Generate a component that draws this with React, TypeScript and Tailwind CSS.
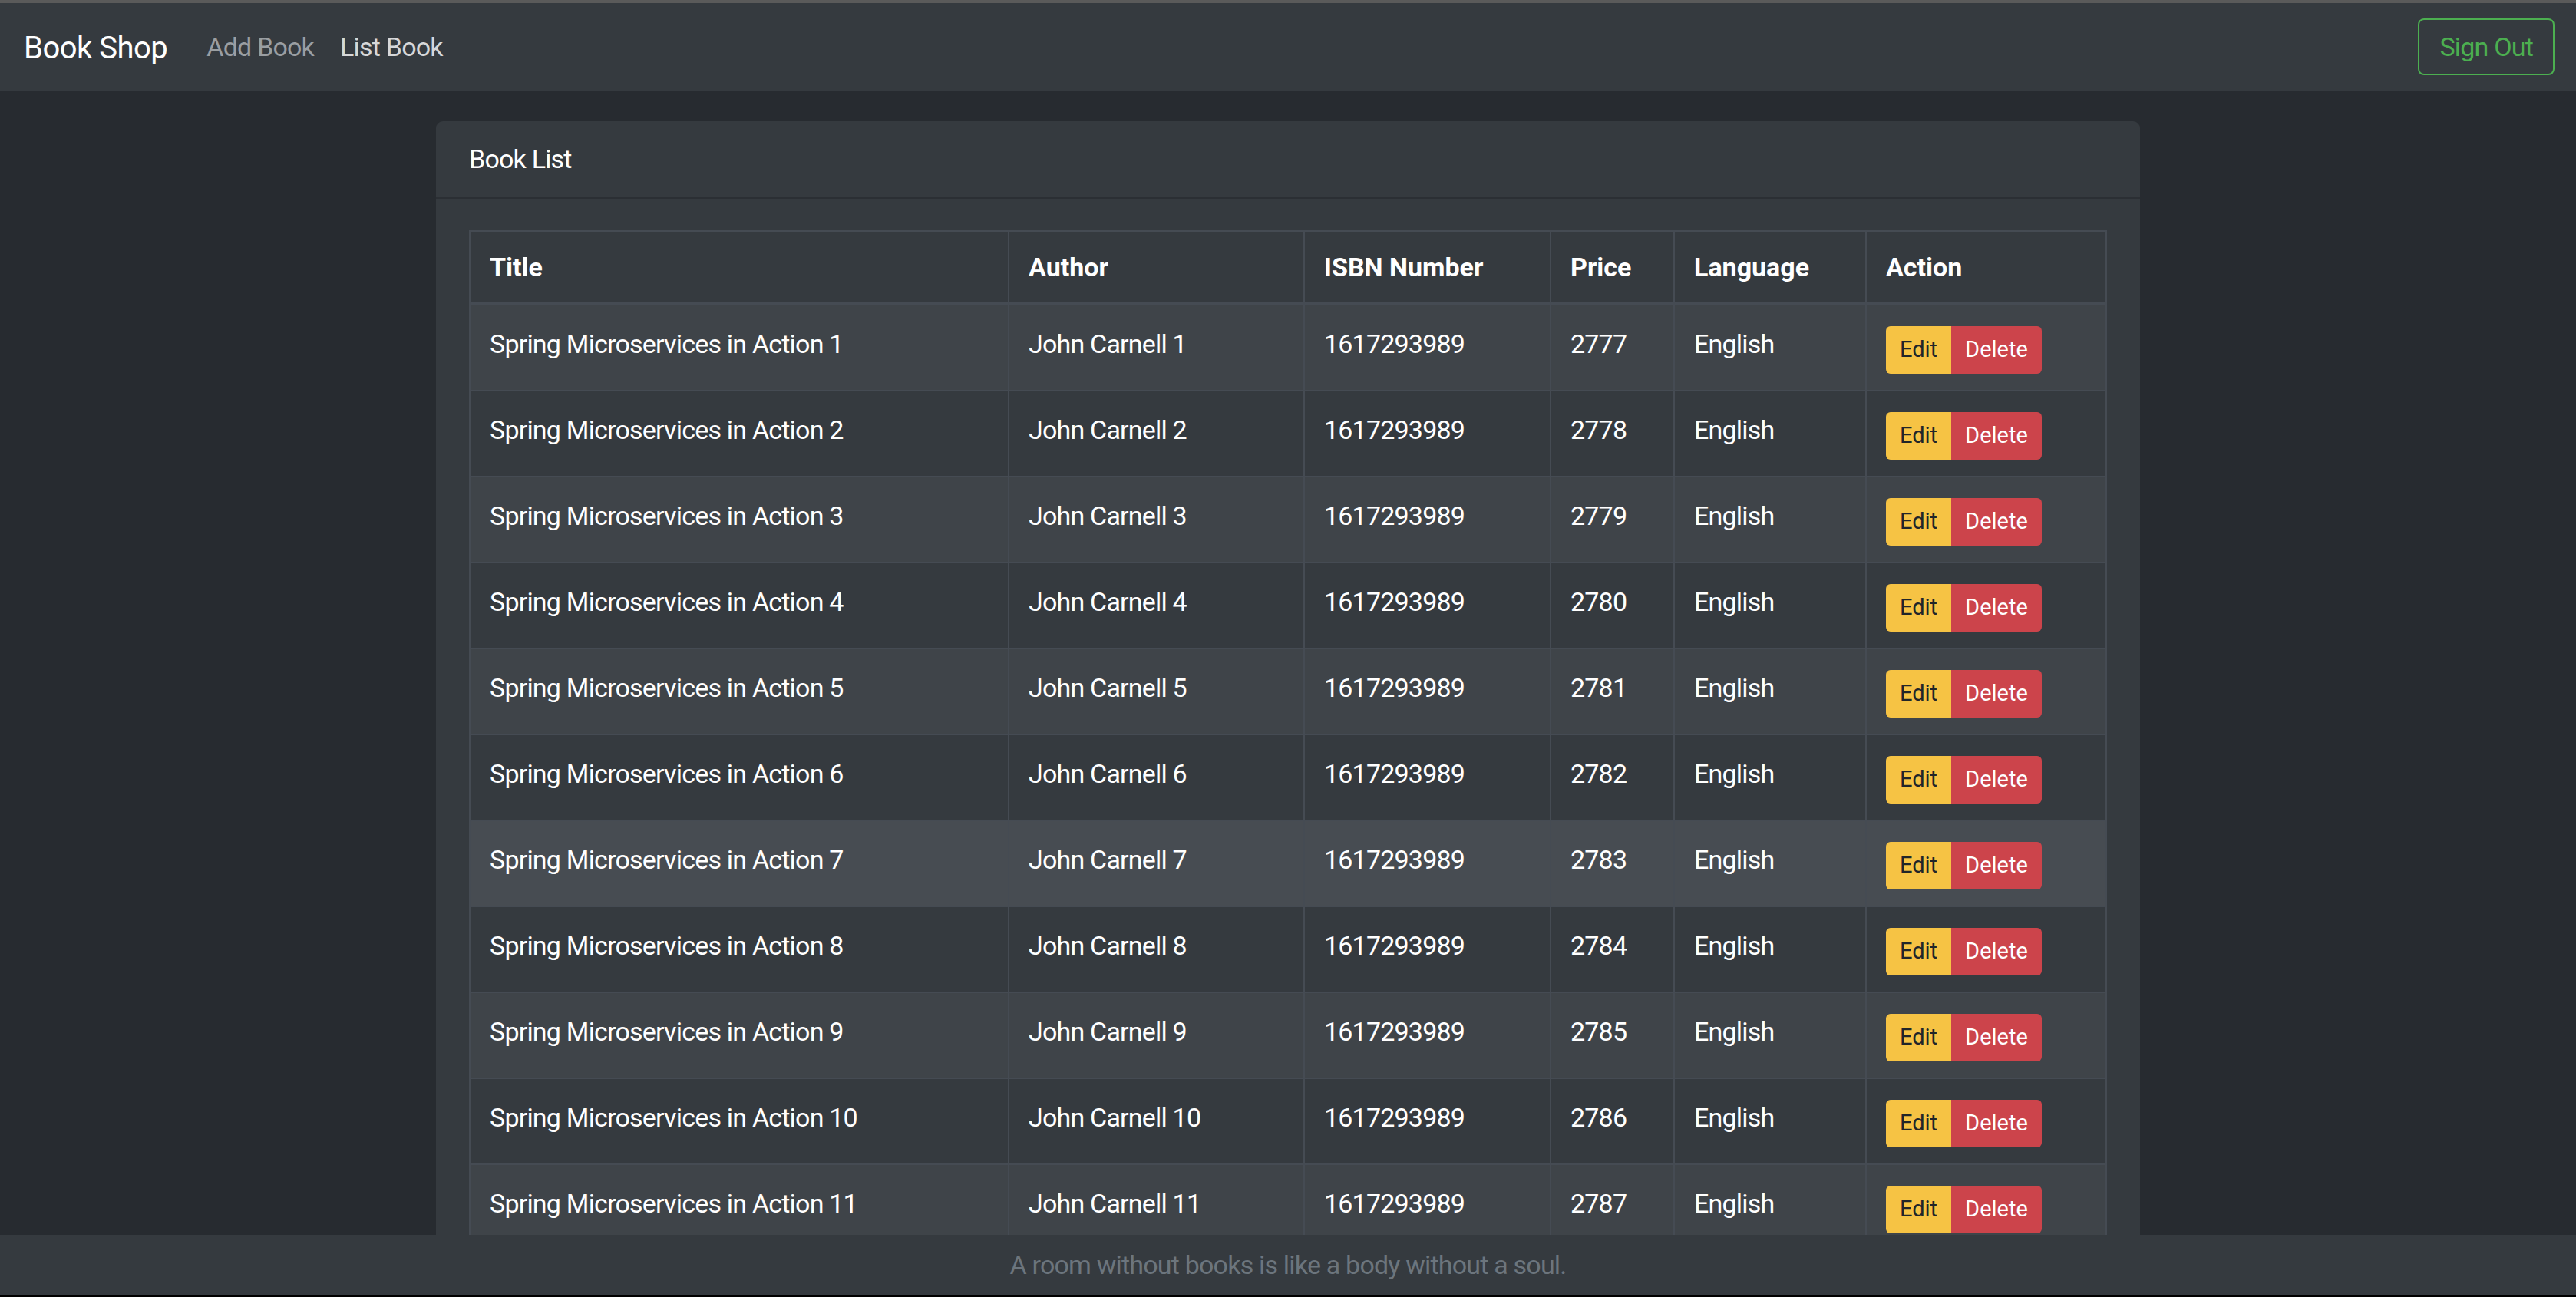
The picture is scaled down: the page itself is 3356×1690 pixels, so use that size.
import React from "react";

type Book = { title: string; author: string; isbn: string; price: number; language: string };

const books: Book[] = Array.from({ length: 11 }, (_, i) => ({
  title: `Spring Microservices in Action ${i + 1}`,
  author: `John Carnell ${i + 1}`,
  isbn: "1617293989",
  price: 2777 + i,
  language: "English",
}));

const cols = ["Title", "Author", "ISBN Number", "Price", "Language", "Action"];
const widths = [702, 385, 321, 161, 250, 315];

function Navbar() {
  return (
    <nav className="h-[114px] shrink-0 flex items-center bg-[#353a3f] pl-[31px] pr-[28px]">
      <a className="text-[40px] leading-[56px] tracking-[-0.5px] text-white mr-[34px] translate-y-[2px]">Book Shop</a>
      <a className="px-[17px] text-[34px] leading-[51px] tracking-[-0.8px] text-[#9a9ea2]">Add Book</a>
      <a className="px-[17px] text-[34px] leading-[51px] tracking-[-0.8px] text-[#d6d7d9]">List Book</a>
      <button className="ml-auto h-[74px] px-[26px] rounded-[8px] border-2 border-[#4caf50] text-[#4caf50] text-[34px] tracking-[-0.8px]">
        Sign Out
      </button>
    </nav>
  );
}

function BookTable() {
  return (
    <table className="w-full table-fixed border-separate border-spacing-0 text-white">
      <colgroup>
        {widths.map((w, i) => (
          <col key={i} style={{ width: w }} />
        ))}
      </colgroup>
      <thead>
        <tr className="bg-[#353a3f]">
          {cols.map((c, i) => (
            <th
              key={c}
              className={`text-left font-bold text-[34px] leading-[51px] tracking-normal px-[25px] pt-[21px] pb-[20px] border-t-2 border-b-4 border-l-2 border-[#454b53] ${i === cols.length - 1 ? "border-r-2" : ""}`}
            >
              {c}
            </th>
          ))}
        </tr>
      </thead>
      <tbody>
        {books.map((b, idx) => {
          const bg = idx === 6 ? "bg-[#474c52]" : idx % 2 === 0 ? "bg-[#3f4449]" : "bg-[#353a3f]";
          const td = "align-top text-[34px] leading-[51px] tracking-[-0.8px] px-[25px] pt-[25px] pb-[23px] border-b-2 border-l-2 border-[#454b53]";
          return (
            <tr key={idx} className={bg}>
              <td className={td}>{b.title}</td>
              <td className={td}>{b.author}</td>
              <td className={td}>{b.isbn}</td>
              <td className={td}>{b.price}</td>
              <td className={td}>{b.language}</td>
              <td className="align-top px-[25px] pt-[27px] pb-[21px] border-b-2 border-l-2 border-r-2 border-[#454b53]">
                <div className="flex">
                  <button className="h-[62px] px-[18px] rounded-l-[6px] bg-[#f6c344] text-[#212529] text-[29px]">Edit</button>
                  <button className="h-[62px] px-[18px] rounded-r-[6px] bg-[#cc444b] text-white text-[29px]">Delete</button>
                </div>
              </td>
            </tr>
          );
        })}
      </tbody>
    </table>
  );
}

export default function App() {
  return (
    <div className="h-[1690px] overflow-hidden flex flex-col bg-[#272b30] font-['Roboto',sans-serif]">
      <div className="h-[4px] shrink-0 bg-[#5a5a5a]" />
      <Navbar />
      <main className="flex-1 min-h-0 overflow-hidden pt-[40px]">
        <div className="mx-auto w-[2220px] rounded-[9px] bg-[#353a3f]">
          <div className="h-[101px] px-[43px] flex items-center border-b-2 border-[#2b2f34] text-white text-[34px] tracking-[-0.8px]">
            Book List
          </div>
          <div className="px-[43px] pt-[41px] pb-[43px]">
            <BookTable />
          </div>
        </div>
      </main>
      <footer className="h-[79px] shrink-0 bg-[#353a3f] flex items-center justify-center text-[#6c757d] text-[34px] tracking-[-0.8px]">
        A room without books is like a body without a soul.
      </footer>
      <div className="h-[2px] shrink-0 bg-black" />
    </div>
  );
}
